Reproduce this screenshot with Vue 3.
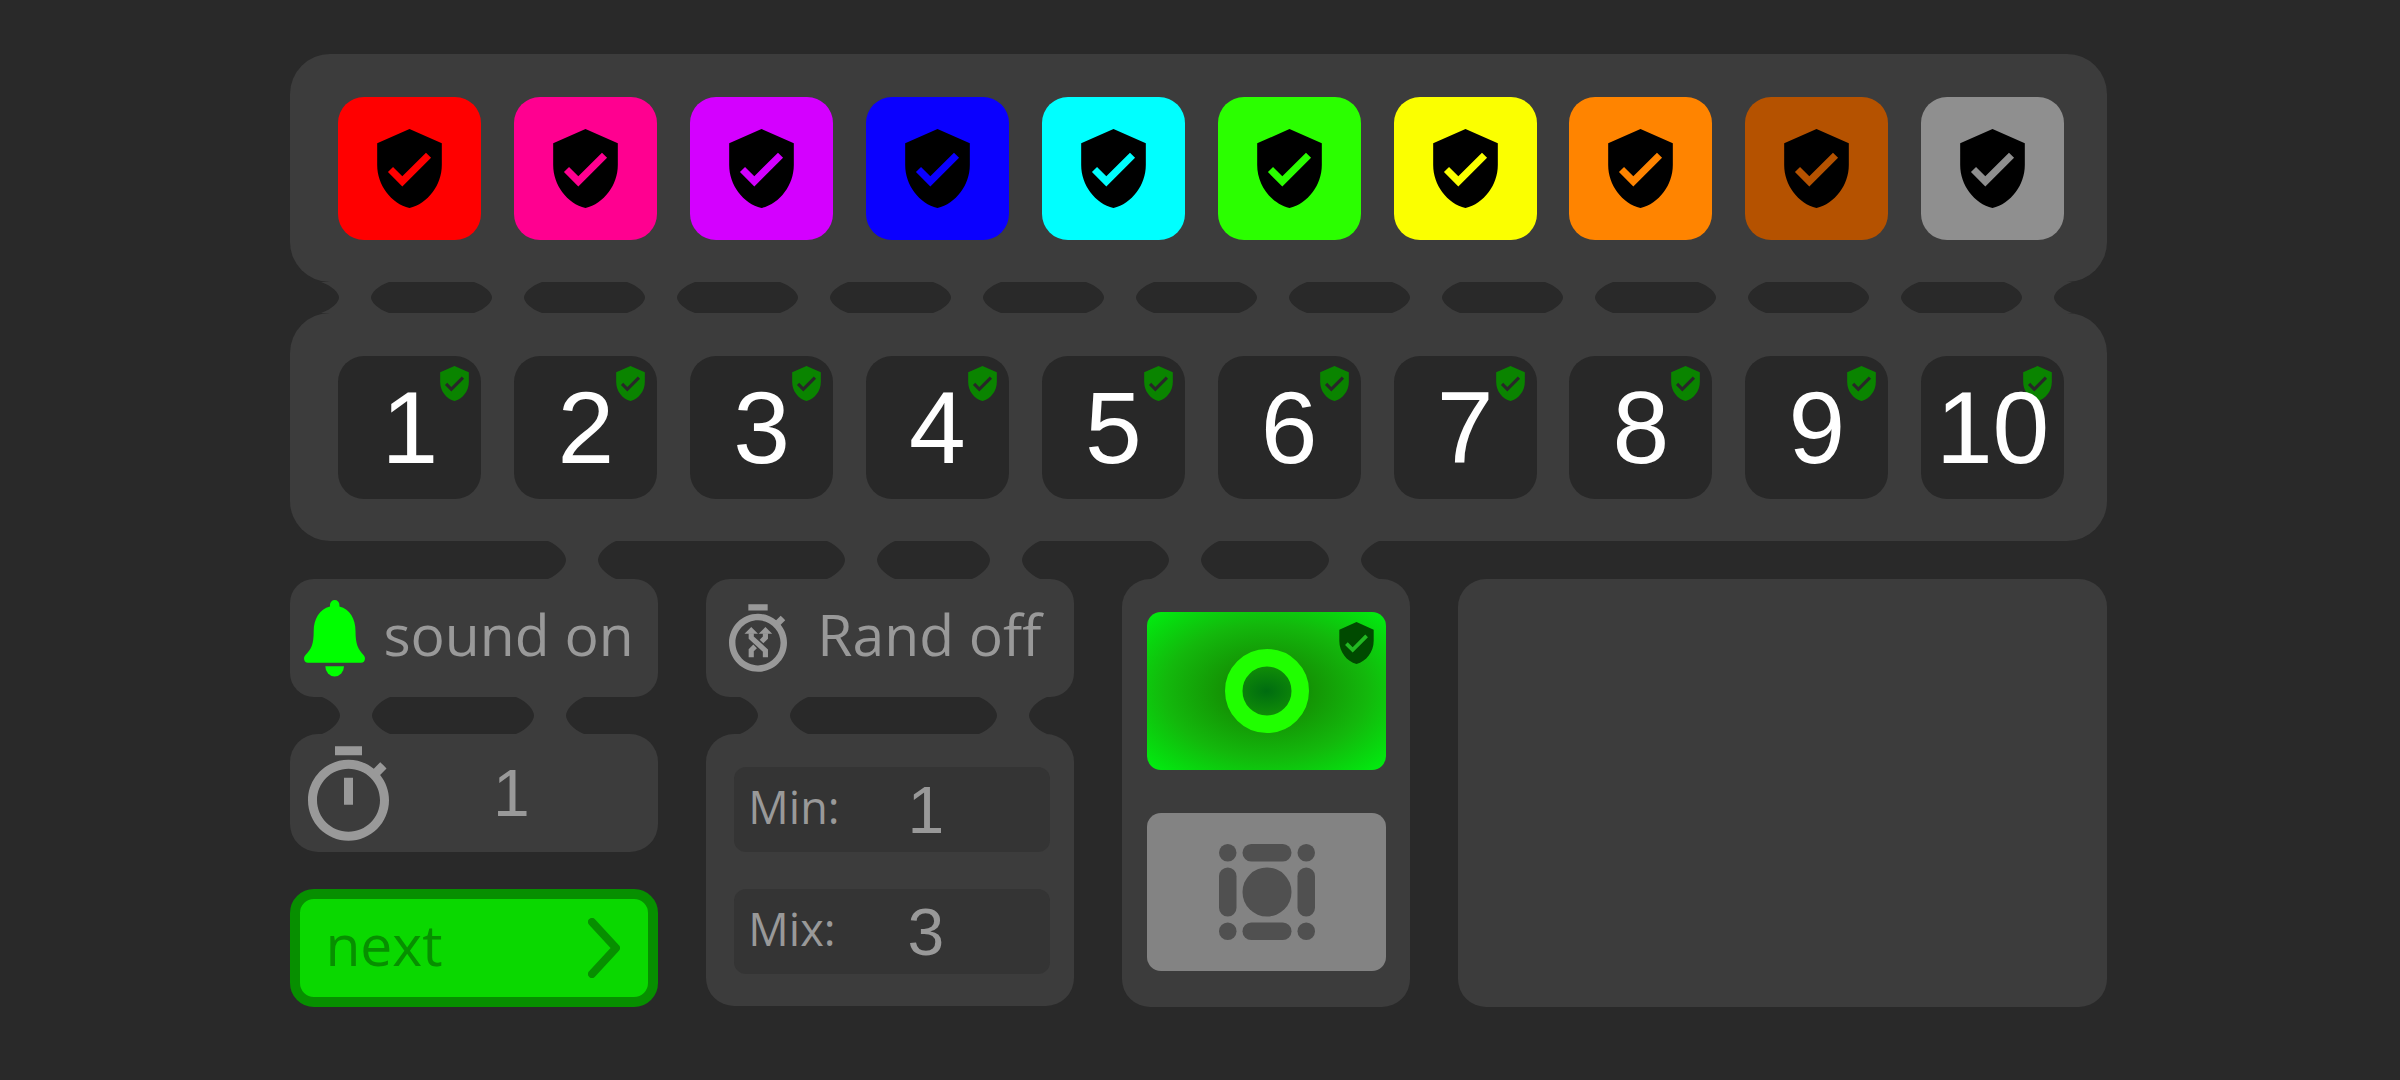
<template>
  <main class="board">
    <section class="panel">
      <button
        v-for="color in colors"
        :key="color.name"
        type="button"
        class="tile"
        :aria-label="color.name"
        :style="{ backgroundColor: color.value }"
        @click="activeColor = color.name"
      >
        <svg class="tile-shield" viewBox="3 1 18 22" aria-hidden="true">
          <path :d="SHIELD_PATH" />
        </svg>
      </button>
    </section>

    <div class="bridges">
      <svg v-for="n in 12" :key="n" class="bridge" viewBox="0 0 68 30" preserveAspectRatio="none" aria-hidden="true">
        <path :d="BRIDGE_PATH" />
      </svg>
    </div>

    <section class="panel">
      <button v-for="n in 10" :key="n" type="button" class="tile number" @click="activeNumber = n">
        <svg class="badge" viewBox="3 1 18 22" aria-hidden="true">
          <path :d="SHIELD_PATH" />
        </svg>
        <span class="digit">{{ n }}</span>
      </button>
    </section>

    <div class="columns links">
      <div v-for="link in links" :key="link.name" class="bridges" :class="link.name">
        <svg v-for="n in link.count" :key="n" class="bridge" viewBox="0 0 68 30" preserveAspectRatio="none" aria-hidden="true">
          <path :d="BRIDGE_PATH" />
        </svg>
      </div>
    </div>

    <div class="columns">
      <section class="column">
        <button type="button" class="card sound" @click="soundOn = !soundOn">
          <svg class="bell" viewBox="0 0 61 77" aria-hidden="true">
            <path d="M26 6.5V4.7a4.7 4.7 0 0 1 9.4 0v1.8C46 9 51.5 19 51.5 31c0 13 2.5 18 8 24 3 3.5 1 7.7-2.5 7.7H4C.5 62.7-1.5 58.5 1.5 55c6-6 8.200-11 8.200-24C9.7 19 15.5 9 26 6.5z" />
            <path d="M21.3 66.3H40a9.35 10.2 0 0 1-18.7 0z" />
          </svg>
          <span class="caption">sound {{ soundOn ? 'on' : 'off' }}</span>
        </button>

        <div class="bridges sound-links">
          <svg v-for="n in 2" :key="n" class="bridge" viewBox="0 0 68 30" preserveAspectRatio="none" aria-hidden="true">
            <path :d="BRIDGE_PATH" />
          </svg>
        </div>

        <div class="card timer">
          <svg class="timer-icon" viewBox="3 1 18 21" aria-hidden="true">
            <path :d="TIMER_PATH" />
            <path d="M11 8h2v6h-2z" />
          </svg>
          <input v-model="delay" class="value" type="text" inputmode="numeric" aria-label="Timer" />
        </div>

        <button type="button" class="next">
          <span class="caption">next</span>
          <svg class="chevron" viewBox="0 0 32 60" aria-hidden="true">
            <path d="M4 4l24 26L4 56" />
          </svg>
        </button>
      </section>

      <section class="column">
        <button type="button" class="card rand" @click="randOn = !randOn">
          <svg class="rand-icon" viewBox="3 1 18 21" aria-hidden="true">
            <path :d="TIMER_PATH" />
            <path d="M9.9 8.1l2.1 2.1H7.8zM14.3 8.1l2.1 2.1h-4.2z" />
            <path class="arrows" d="M9.9 10v1.4l4.4 4v2.1M9.9 17.5v-2.2l1.2-1.2M14.3 10v1.4l-1.2 1.2" />
          </svg>
          <span class="caption">Rand {{ randOn ? 'on' : 'off' }}</span>
        </button>

        <div class="bridges rand-links">
          <svg v-for="n in 2" :key="n" class="bridge" viewBox="0 0 68 30" preserveAspectRatio="none" aria-hidden="true">
            <path :d="BRIDGE_PATH" />
          </svg>
        </div>

        <div class="card range">
          <div class="field">
            <label for="range-min">Min:</label>
            <input id="range-min" v-model="min" class="value" type="text" inputmode="numeric" />
          </div>
          <div class="field">
            <label for="range-max">Mix:</label>
            <input id="range-max" v-model="max" class="value" type="text" inputmode="numeric" />
          </div>
        </div>
      </section>

      <section class="card modes">
        <button type="button" class="mode mode-ring" aria-label="Single" @click="mode = 'single'">
          <svg class="ring" viewBox="0 0 84 84" aria-hidden="true">
            <circle cx="42" cy="42" r="33.25" />
          </svg>
          <svg class="mode-shield" viewBox="3 1 18 22" aria-hidden="true">
            <path d="M5 6h14v12H5z" fill="#22b822" />
            <path :d="SHIELD_PATH" fill="#004a00" />
          </svg>
        </button>
        <button type="button" class="mode mode-grid" aria-label="Grid" @click="mode = 'grid'">
          <svg class="grid-icon" viewBox="0 0 96 96" aria-hidden="true">
            <circle cx="8.75" cy="8.75" r="8.75" />
            <circle cx="87.25" cy="8.75" r="8.75" />
            <circle cx="8.75" cy="87.25" r="8.75" />
            <circle cx="87.25" cy="87.25" r="8.75" />
            <rect x="23.5" y="0" width="49" height="17.5" rx="8.75" />
            <rect x="23.5" y="78.5" width="49" height="17.5" rx="8.75" />
            <rect x="0" y="23.5" width="17.5" height="49" rx="8.75" />
            <rect x="78.5" y="23.5" width="17.5" height="49" rx="8.75" />
            <circle cx="48" cy="48" r="24.5" />
          </svg>
        </button>
      </section>

      <section class="card"></section>
    </div>
  </main>
</template>

<script setup>
import { ref } from 'vue';

const SHIELD_PATH =
  'M12 1L3 5v6c0 5.55 3.84 10.74 9 12 5.16-1.26 9-6.45 9-12V5l-9-4zM10 17l-4-4 1.41-1.41L10 14.17l6.59-6.59L18 9l-8 8z';
const TIMER_PATH =
  'M15 1H9v2h6V1zM19.03 7.39l1.42-1.42c-.43-.51-.9-.99-1.41-1.41l-1.42 1.42C16.07 4.74 14.12 4 12 4c-4.97 0-9 4.03-9 9s4.02 9 9 9 9-4.03 9-9c0-2.12-.74-4.07-1.97-5.61zM12 20c-3.87 0-7-3.13-7-7s3.13-7 7-7 7 3.13 7 7-3.13 7-7 7z';
// Narrow-waisted joint between two panels
const BRIDGE_PATH = 'M0 0H68C56 4 50 11 50 15S56 26 68 30H0C12 26 18 19 18 15S12 4 0 0z';

const colors = [
  { name: 'red', value: '#ff0000' },
  { name: 'pink', value: '#ff0090' },
  { name: 'purple', value: '#d400ff' },
  { name: 'blue', value: '#0a00ff' },
  { name: 'cyan', value: '#00ffff' },
  { name: 'green', value: '#2bff00' },
  { name: 'yellow', value: '#fbff00' },
  { name: 'orange', value: '#ff8400' },
  { name: 'brown', value: '#b55200' },
  { name: 'gray', value: '#8f8f8f' }
];

const links = [
  { name: 'to-sound', count: 1 },
  { name: 'to-rand', count: 2 },
  { name: 'to-modes', count: 2 }
];

const activeColor = ref('red');
const activeNumber = ref(1);
const soundOn = ref(true);
const randOn = ref(false);
const delay = ref('1');
const min = ref('1');
const max = ref('3');
const mode = ref('single');
</script>

<style>
body {
  margin: 0;
  background: #292929;
}
</style>

<style scoped>
* {
  box-sizing: border-box;
}

.board {
  padding: 54px 12.2% 54px 12.1%;
  font-family: 'Open Sans', 'Noto Sans', sans-serif;
  color: #999;
}

button {
  margin: 0;
  padding: 0;
  border: 0;
  font: inherit;
  color: inherit;
  cursor: pointer;
}

svg {
  display: block;
  flex: none;
}

.panel {
  display: flex;
  justify-content: space-between;
  padding: 43px 43px 42px 48px;
  border-radius: 40px;
  background: #3c3c3c;
}

.tile {
  position: relative;
  display: flex;
  align-items: center;
  justify-content: center;
  width: 143px;
  height: 143px;
  border-radius: 26px;
}

.tile-shield {
  width: 65px;
  height: 79px;
  fill: #000;
}

.number {
  background: #282828;
  color: #fff;
  font-family: 'Liberation Sans', Arial, sans-serif;
  font-size: 102px;
}

.badge {
  position: absolute;
  top: 10px;
  right: 12px;
  width: 29px;
  height: 35px;
  fill: #0a8400;
}

.digit {
  position: relative;
  padding-top: 2px;
}

.bridges {
  display: flex;
  justify-content: space-between;
  height: 31px;
  padding: 0 35px 0 31px;
}

.bridge {
  width: 68px;
  height: 100%;
  fill: #3c3c3c;
}

.columns {
  display: grid;
  grid-template-columns: minmax(0, 368fr) minmax(0, 368fr) minmax(0, 288fr) minmax(0, 649fr);
  gap: 48px;
}

.links .bridges {
  height: 38px;
}

.links .to-sound {
  justify-content: flex-end;
  padding: 0 42px;
}

.links .to-rand {
  padding: 0 34px 0 121px;
}

.links .to-modes {
  padding: 0 31px 0 29px;
}

.column {
  display: flex;
  flex-direction: column;
}

.card {
  border-radius: 28px;
  background: #3c3c3c;
}

.caption {
  padding-bottom: 9px;
  font-size: 57px;
  line-height: 78px;
  white-space: nowrap;
}

.sound,
.rand,
.timer {
  display: flex;
  align-items: center;
  height: 118px;
}

.sound {
  gap: 18px;
  padding-left: 14px;
  border-radius: 24px;
}

.bell {
  width: 61px;
  height: 77px;
  fill: #00ff00;
}

.column .bridges {
  height: 37px;
}

.column .sound-links {
  padding: 0 74px 0 32px;
}

.column .rand-links {
  padding: 0 27px 0 34px;
}

.timer {
  padding: 0 25px 0 18px;
}

.timer-icon {
  width: 81px;
  height: 95px;
  fill: #999;
}

.value {
  flex: 1;
  min-width: 0;
  margin: 0;
  padding: 0;
  border: 0;
  outline: 0;
  background: transparent;
  color: #999;
  font-family: 'Liberation Sans', Arial, sans-serif;
  font-size: 66px;
  text-align: center;
}

.next {
  display: flex;
  align-items: center;
  justify-content: space-between;
  height: 118px;
  margin-top: 37px;
  padding: 0 28px 0 25px;
  border: 10px solid #078f00;
  border-radius: 24px;
  background: #0ad800;
  color: #078f00;
}

.chevron {
  width: 32px;
  height: 60px;
  fill: none;
  stroke: #078f00;
  stroke-width: 8;
  stroke-linecap: round;
  stroke-linejoin: round;
}

.rand {
  gap: 30px;
  padding-left: 23px;
  border-radius: 24px;
}

.rand-icon {
  width: 58px;
  height: 68px;
  fill: #999;
}

.arrows {
  fill: none;
  stroke: #999;
  stroke-width: 1.6;
}

.range {
  display: flex;
  flex-direction: column;
  gap: 37px;
  padding: 33px 24px 32px 28px;
}

.field {
  display: flex;
  align-items: center;
  height: 85px;
  padding-right: 63px;
  border-radius: 12px;
  background: #343434;
}

.field label {
  width: 130px;
  padding: 0 0 6px 14px;
  font-size: 45px;
  line-height: 60px;
}

.modes {
  display: flex;
  flex-direction: column;
  gap: 43px;
  padding: 33px 24px 36px 25px;
}

.mode {
  position: relative;
  display: flex;
  align-items: center;
  justify-content: center;
  height: 158px;
  border-radius: 14px;
}

.mode-ring {
  background: radial-gradient(#006c10 0%, #149605 28%, #13b80c 60%, #00f010 100%);
}

.mode-grid {
  background: #838383;
}

.ring {
  width: 84px;
  height: 84px;
  fill: none;
  stroke: #20ff00;
  stroke-width: 17.5;
}

.mode-shield {
  position: absolute;
  top: 10px;
  right: 12px;
  width: 35px;
  height: 42px;
}

.grid-icon {
  width: 96px;
  height: 96px;
  fill: #505050;
}
</style>
